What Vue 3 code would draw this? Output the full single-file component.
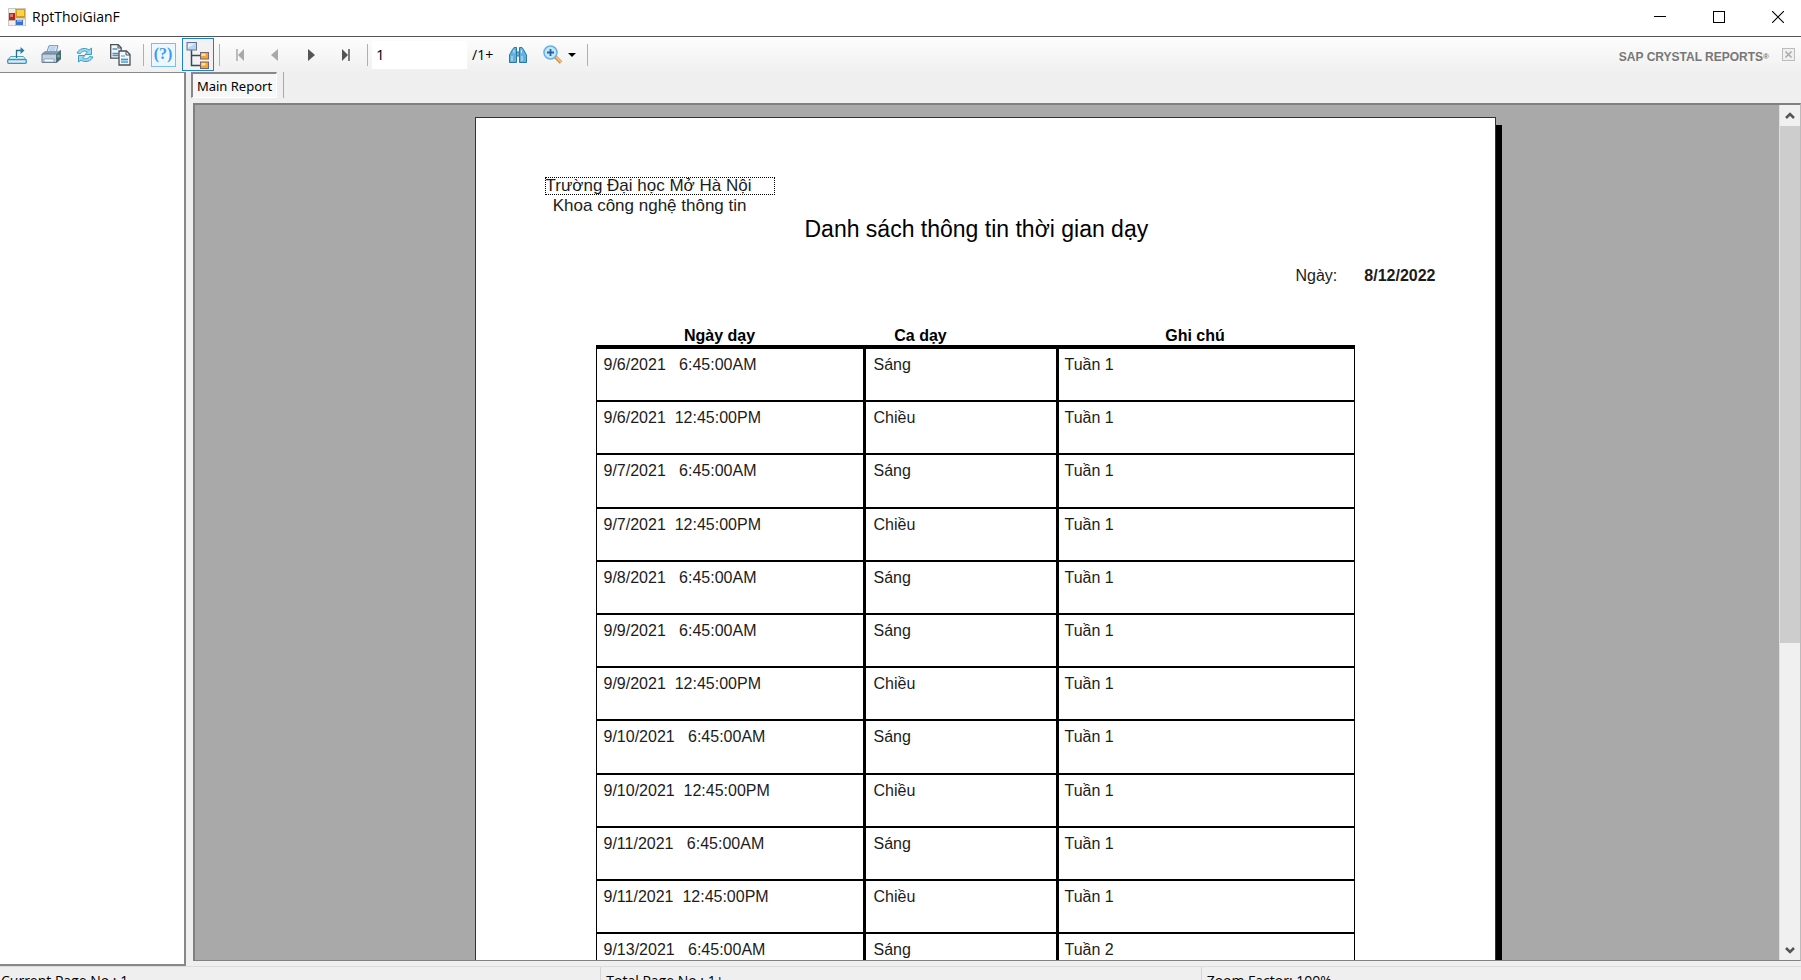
<script setup>
import { ref } from 'vue'

const pageNo = ref('1')
const rows = [
  ['9/6/2021   6:45:00AM', 'Sáng', 'Tuần 1'],
  ['9/6/2021  12:45:00PM', 'Chiều', 'Tuần 1'],
  ['9/7/2021   6:45:00AM', 'Sáng', 'Tuần 1'],
  ['9/7/2021  12:45:00PM', 'Chiều', 'Tuần 1'],
  ['9/8/2021   6:45:00AM', 'Sáng', 'Tuần 1'],
  ['9/9/2021   6:45:00AM', 'Sáng', 'Tuần 1'],
  ['9/9/2021  12:45:00PM', 'Chiều', 'Tuần 1'],
  ['9/10/2021   6:45:00AM', 'Sáng', 'Tuần 1'],
  ['9/10/2021  12:45:00PM', 'Chiều', 'Tuần 1'],
  ['9/11/2021   6:45:00AM', 'Sáng', 'Tuần 1'],
  ['9/11/2021  12:45:00PM', 'Chiều', 'Tuần 1'],
  ['9/13/2021   6:45:00AM', 'Sáng', 'Tuần 2'],
]
</script>

<template>
  <div class="window">
    <header class="titlebar">
      <svg class="app-icon" width="18" height="18" viewBox="0 0 18 18" aria-hidden="true">
        <rect x=".5" y=".5" width="17" height="17" fill="#f3f0ec" stroke="#ccc8c4" />
        <rect x="1" y="5" width="6" height="7" fill="#b5271c" />
        <rect x="2" y="6" width="3" height="3" fill="#e27468" />
        <rect x="8" y="1" width="9" height="9" fill="#d79a10" />
        <rect x="9" y="2" width="7" height="6" fill="#fbd250" />
        <rect x="8" y="12" width="7" height="5" fill="#3b6fd0" />
        <rect x="9" y="12" width="5" height="2" fill="#7fa8f0" />
        <path d="M7.500 0v18M0 12.500h7M7 11h11" stroke="#bdb7b0" fill="none" />
      </svg>
      <h1>RptThoiGianF</h1>
      <div class="caption">
        <button aria-label="Minimize">
          <svg width="12" height="12"><path d="M0 5.500h12" stroke="#000" /></svg>
        </button>
        <button aria-label="Maximize">
          <svg width="12" height="12"><rect x=".5" y=".5" width="11" height="11" fill="none" stroke="#000" /></svg>
        </button>
        <button aria-label="Close">
          <svg width="12" height="12"><path d="M0 0l12 12M12 0L0 12" stroke="#000" stroke-width="1.100" /></svg>
        </button>
      </div>
    </header>

    <div class="toolbar">
      <button class="tool" aria-label="Export">
        <svg width="20" height="18" viewBox="0 0 20 18" fill="none">
          <path d="M3.500 10.500h13l2.500 3.500H1z" fill="#e8f6fc" stroke="#4ba3c8" />
          <rect x=".7" y="13.500" width="18.600" height="3.800" rx="1" fill="#d4edf8" stroke="#3c93bd" stroke-width="1.300" />
          <path d="M9.500 12V4.500h5" stroke="#2a6e8e" stroke-width="1.300" />
          <path d="M13.500 1l4 3.500-4 3.500z" fill="#2a7fa6" />
        </svg>
      </button>
      <button class="tool" aria-label="Print">
        <svg width="21" height="19" viewBox="0 0 21 19">
          <path d="M5.500 8L8 .7h9L15 8z" fill="#dcecfb" stroke="#6d92ba" />
          <path d="M8.500 3h6M8 5h6" stroke="#9dbfe2" />
          <path d="M1 8.500L4 6h13l3-1v9l-4 4H1z" fill="#879ab2" />
          <path d="M1 9h14.500v8.500H1z" fill="#c3d2e3" stroke="#667a94" />
          <path d="M15.500 9L20 5v9l-4.500 3.500z" fill="#4f637d" />
          <path d="M3 14h10v3H3z" fill="#f7fbff" stroke="#7791ae" stroke-width=".7" />
          <circle cx="17.500" cy="11" r="1.500" fill="#4ccb4a" />
        </svg>
      </button>
      <button class="tool" aria-label="Refresh">
        <svg width="18" height="16" viewBox="0 0 18 16" fill="#9ad9ee" stroke="#3d9fc4" stroke-linejoin="round">
          <path d="M1 6C3 1.500 9 0 13 3l2.500-2v6.500H9L11.500 5C9 3.500 6 4 4.500 6.500z" />
          <path d="M17 10c-2 4.500-8 6-12 3l-2.500 2V8.500H9L6.500 11c2.500 1.500 5.500 1 7-1.500z" />
        </svg>
      </button>
      <button class="tool copy" aria-label="Copy">
        <svg width="21" height="22" viewBox="0 0 21 22">
          <path d="M.7.7h7.500l3 3v10.500H.7z" fill="#f4f8fb" stroke="#4c5156" stroke-width="1.300" />
          <path d="M8 1v3h3" fill="none" stroke="#4c5156" />
          <path d="M2.500 5h5M2.500 9.500h6M2.500 11.500h6" stroke="#4c92c8" stroke-width="1.300" />
          <path d="M9 7h7.500l3.500 3.500V21H9z" fill="#f4f8fb" stroke="#4c5156" stroke-width="1.300" />
          <path d="M16 7v4h4" fill="none" stroke="#4c5156" />
          <path d="M11 14h7v5h-7z" fill="#a8d5f3" />
          <path d="M11 12h4M11 15.500h7M11 18h7" stroke="#4c92c8" />
        </svg>
      </button>
      <i class="sep"></i>
      <button class="tool help-btn" aria-label="Help"><span class="help">(?)</span></button>
      <button class="tool tree" aria-label="Toggle group tree" aria-pressed="true">
        <svg width="26" height="28" viewBox="0 0 26 28">
          <path d="M6.500 9v15.500H16M6.500 14.500H16" fill="none" stroke="#34495f" stroke-width="1.500" />
          <rect x="2" y="1.500" width="9.500" height="7.500" fill="#b9d3f3" stroke="#68748e" />
          <path d="M3 2.500h7L3 7z" fill="#e6f1ff" />
          <rect x="15.500" y="11.500" width="8" height="6.500" fill="#f4a522" stroke="#7a6374" />
          <rect x="16.500" y="12.500" width="4" height="2.500" fill="#ffe39a" />
          <rect x="15.500" y="21" width="8" height="6.500" fill="#f4a522" stroke="#7a6374" />
          <rect x="16.500" y="22" width="4" height="2.500" fill="#ffe39a" />
        </svg>
      </button>
      <i class="sep"></i>
      <button class="tool first" aria-label="First page" disabled>
        <svg width="8" height="12"><path d="M1 0v12" stroke="#a8a8a8" stroke-width="1.500" /><path d="M8 0v12L2 6z" fill="#a8a8a8" /></svg>
      </button>
      <button class="tool prev" aria-label="Previous page" disabled>
        <svg width="7" height="12"><path d="M7 0v12L0 6z" fill="#a8a8a8" /></svg>
      </button>
      <button class="tool next" aria-label="Next page">
        <svg width="7" height="12"><path d="M0 0v12l7-6z" fill="#555" /></svg>
      </button>
      <button class="tool last" aria-label="Last page">
        <svg width="8" height="12"><path d="M7 0v12" stroke="#555" stroke-width="1.500" /><path d="M0 0v12l6-6z" fill="#555" /></svg>
      </button>
      <i class="sep"></i>
      <input v-model="pageNo" class="page-no" aria-label="Page number" />
      <span class="page-total">/1+</span>
      <button class="tool find" aria-label="Find text">
        <svg width="18" height="16" viewBox="0 0 18 16" stroke="#2878aa" fill="#64b2dc">
          <path d="M3.500 2.500L5 .5h2.500v15H.5V8z" />
          <path d="M14.500 2.500L13 .5h-2.500v15h7V8z" />
          <path d="M7.500 5h3v4h-3z" />
          <path d="M3 9v5M13 9v5M5 3v3M12.500 3v3" stroke="#c6e8f8" />
        </svg>
      </button>
      <button class="tool zoom" aria-label="Zoom">
        <svg width="20" height="19" viewBox="0 0 20 19">
          <path d="M12 11.500l6 6" stroke="#d98a42" stroke-width="3.500" />
          <path d="M12 11l6 6" stroke="#f8cf9c" stroke-width="1.200" />
          <circle cx="7.500" cy="7.500" r="6.500" fill="#c4e6fb" stroke="#6bb2e2" stroke-width="1.600" />
          <path d="M7.500 4v7M4 7.500h7" stroke="#2364a0" stroke-width="1.800" />
        </svg>
        <svg width="8" height="4"><path d="M0 0h8L4 4z" /></svg>
      </button>
      <i class="sep"></i>
      <strong class="brand">SAP CRYSTAL REPORTS<span class="reg">®</span></strong>
      <button class="close-view" aria-label="Close view">
        <svg width="13" height="13"><rect x=".5" y=".5" width="12" height="12" fill="#efefef" stroke="#bdbdbd" /><path d="M3.500 3.500l6 6M9.500 3.500l-6 6" stroke="#aaa" stroke-width="1.500" /></svg>
      </button>
    </div>

    <div class="body">
      <aside class="groups"></aside>
      <main class="viewer">
        <div class="tabs" role="tablist">
          <button class="tab" role="tab" aria-selected="true">Main Report</button>
          <i class="tab-end"></i>
        </div>
        <div class="viewport">
          <div class="canvas">
            <article class="page">
              <div class="school">Trường Đại học Mở Hà Nội</div>
              <div class="faculty">Khoa công nghệ thông tin</div>
              <h2>Danh sách thông tin thời gian dạy</h2>
              <p class="date"><span>Ngày:</span><b>8/12/2022</b></p>
              <table>
                <colgroup><col class="c1" /><col class="c2" /><col class="c3" /></colgroup>
                <thead>
                  <tr><th>Ngày dạy</th><th>Ca dạy</th><th>Ghi chú</th></tr>
                </thead>
                <tbody>
                  <tr v-for="row in rows" :key="row[0]">
                    <td v-for="(cell, i) in row" :key="i">{{ cell }}</td>
                  </tr>
                </tbody>
              </table>
            </article>
          </div>
          <div class="scrollbar">
            <button aria-label="Scroll up">
              <svg width="10" height="8"><path d="M1 6l4-4 4 4" fill="none" stroke="#555" stroke-width="2.500" /></svg>
            </button>
            <div class="track"><div class="thumb"></div></div>
            <button aria-label="Scroll down">
              <svg width="10" height="8"><path d="M1 2l4 4 4-4" fill="none" stroke="#555" stroke-width="2.500" /></svg>
            </button>
          </div>
        </div>
      </main>
    </div>

    <footer class="status">
      <span>Current Page No.: 1</span>
      <span>Total Page No.: 1+</span>
      <span>Zoom Factor: 100%</span>
    </footer>
  </div>
</template>

<style>
body { margin: 0; overflow: hidden; }
</style>

<style scoped>
* { box-sizing: border-box; }
.window {
  height: 100vh;
  display: flex;
  flex-direction: column;
  overflow: hidden;
  background: #efefef;
  color: #000;
  font-family: "Open Sans", "Noto Sans", sans-serif;
}
button { border: 0; padding: 0; background: none; font: inherit; color: inherit; }
svg { display: block; flex: none; }

.titlebar {
  flex: 0 0 37px;
  display: flex;
  align-items: center;
  padding: 0 0 3px 8px;
  gap: 6px;
  background: #fff;
  border-bottom: 1px solid #555;
}
h1 { margin: 0; font-size: 14px; font-weight: 400; line-height: 20px; }
.caption { margin-left: auto; display: flex; gap: 12px; }
.caption button { width: 47px; height: 32px; display: flex; align-items: center; justify-content: center; }

.toolbar {
  flex: 0 0 35px;
  display: flex;
  align-items: center;
  background: linear-gradient(#fdfdfd, #f0f0f0);
}
.tool { width: 34px; height: 33px; display: flex; align-items: center; justify-content: center; }
.copy { width: 36px; }
.sep { width: 10px; height: 22px; display: flex; justify-content: center; }
.sep::before { content: ""; width: 1px; background: #b0b0b0; }
.help {
  width: 25px;
  height: 24px;
  border: 1px solid #7dbcf2;
  background: #edf7ff;
  color: #3d9bf0;
  font: bold 16px/20px "Liberation Serif", serif;
}
.help-btn { width: 30px; }
.tree { width: 32px; margin-left: 4px; border: 1px solid #1c80d8; background: #f2f2f2; }
.first, .last { width: 32px; }
.prev { width: 36px; }
.next { width: 38px; }
.page-no {
  width: 95px;
  height: 28px;
  border: 0;
  padding: 0 4px 2px;
  background: #fff;
  font: 15px "Open Sans", sans-serif;
}
.page-total { width: 33px; padding-left: 5px; font-size: 14px; }
.find { width: 36px; }
.zoom { width: 46px; gap: 5px; }
.brand {
  margin-left: auto;
  font: bold 12px/16px "Liberation Sans", Arial, sans-serif;
  color: #777;
  padding-top: 4px;
}
.reg { font-size: 8px; vertical-align: 2px; }
.close-view { margin: 0 6px 0 13px; }

.body { flex: 1; min-height: 0; display: flex; }
.groups {
  flex: 0 0 186px;
  background: #fff;
  border: solid #888;
  border-width: 1px 2px 2px 0;
}
.viewer { flex: 1; min-width: 0; display: flex; flex-direction: column; padding: 0 0 5px 7px; }
.tabs { flex: 0 0 31px; display: flex; align-items: flex-start; }
.tab {
  margin-left: -2px;
  width: 86px;
  height: 26px;
  border: solid #888;
  border-width: 2px 1px 1px 2px;
  border-right-color: #fff;
  border-bottom-color: #fff;
  background: #f7f7f7;
  font: 13px "Noto Sans", sans-serif;
  white-space: nowrap;
}
.tab-end { width: 1px; height: 26px; margin-left: 6px; background: #aaa; }
.viewport {
  flex: 1;
  min-height: 0;
  display: flex;
  overflow: hidden;
  background: #a9a9a9;
  border: 2px solid #808080;
  border-right: 1px solid #bbb;
  border-bottom-width: 1px;
}
.canvas { flex: 1; min-width: 0; overflow: hidden; padding: 12px 4px 0 0; }
.page {
  width: 1021px;
  min-height: 1320px;
  margin: 0 auto;
  padding: 59px 59px 0 69px;
  background: #fff;
  border: 1px solid #333;
  box-shadow: 6px 8px 0 #000;
  color: #1c1c1c;
  font-family: "Liberation Sans", Arial, sans-serif;
  font-size: 16px;
}
.school {
  width: 230px;
  height: 18px;
  border: 1px dotted #000;
  font-size: 17px;
  line-height: 15px;
  white-space: nowrap;
}
.faculty { width: 202px; font-size: 17px; line-height: 22px; text-align: right; white-space: nowrap; }
h2 { margin: 0 0 0 260px; font-size: 23px; font-weight: 400; line-height: 24px; color: #000; white-space: nowrap; }
.date { margin: 25px 0 0; display: flex; justify-content: flex-end; gap: 27px; line-height: 20px; }
table {
  width: 759px;
  margin: 40px 0 0 51px;
  table-layout: fixed;
  border-collapse: separate;
  border-spacing: 0;
}
.c1 { width: 270px; }
.c2 { width: 193px; }
th { height: 23px; padding: 0; border-bottom: 4px solid #000; line-height: 19px; color: #000; }
th:first-child { padding-right: 22px; }
th:nth-child(2) { padding-right: 83px; }
th:last-child { padding-right: 23px; }
td {
  height: 53px;
  padding: 6px 6px 0;
  border-bottom: 2px solid #000;
  border-right: 3px solid #000;
  vertical-align: top;
  line-height: 20px;
  white-space: pre;
}
tr:nth-child(5n + 3) td { height: 54px; }
td:first-child { border-left: 1px solid #000; padding-left: 7px; }
td:nth-child(2) { padding-left: 8px; }
td:last-child { border-right-width: 1px; }

.scrollbar { flex: 0 0 21px; display: flex; flex-direction: column; background: #f0f0f0; border-left: 1px solid #e0e0e0; }
.scrollbar button { height: 21px; display: flex; align-items: center; justify-content: center; }
.track { flex: 1; display: flex; flex-direction: column; }
.thumb { flex: 7; background: #cdcdcd; }
.track::after { content: ""; flex: 4; }

.status {
  flex: 0 0 14px;
  display: grid;
  grid-template-columns: repeat(3, 1fr);
  overflow: hidden;
  border-top: 1px solid #dcdcdc;
  font-size: 14px;
  line-height: 20px;
}
.status span { padding: 4px 0 0 5px; border-left: 1px solid #d5d5d5; }
.status span:first-child { padding-left: 1px; border-left: 0; }
</style>
